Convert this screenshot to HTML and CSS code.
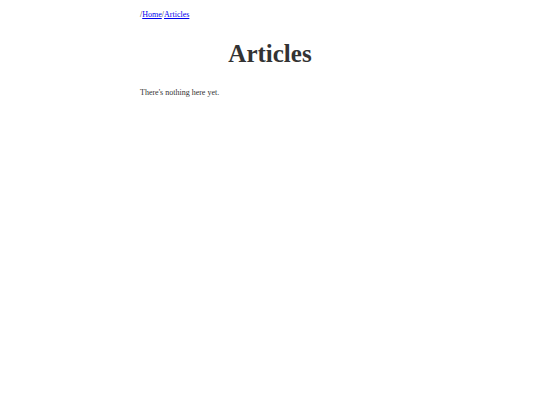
FILE: index.html
```html
<!DOCTYPE html>
<html>
<head>
<meta charset="utf-8">
<link rel="stylesheet" href="styles.css">
</head>
<body>
<div class="page">
  <nav class="crumbs">/<a href="#">Home</a>/<a href="#">Articles</a></nav>
  <h1 class="title">Articles</h1>
  <p class="empty">There's nothing here yet.</p>
</div>
</body>
</html>
```
FILE: styles.css
```css
body {
  margin: 0;
  background: #fff;
  color: #333;
  font-family: "Liberation Serif", serif;
  -webkit-font-smoothing: antialiased;
}
.page {
  width: 260px;
  margin: 0 auto;
  padding-top: 9px;
}
.crumbs {
  font-size: 8px;
  line-height: 12px;
}
.crumbs a {
  color: #0000ee;
}
.title {
  text-align: center;
  font-size: 25px;
  line-height: 30px;
  margin: 18px 0 0;
}
.empty {
  font-size: 8px;
  line-height: 12px;
  margin: 18px 0 0;
}
```
